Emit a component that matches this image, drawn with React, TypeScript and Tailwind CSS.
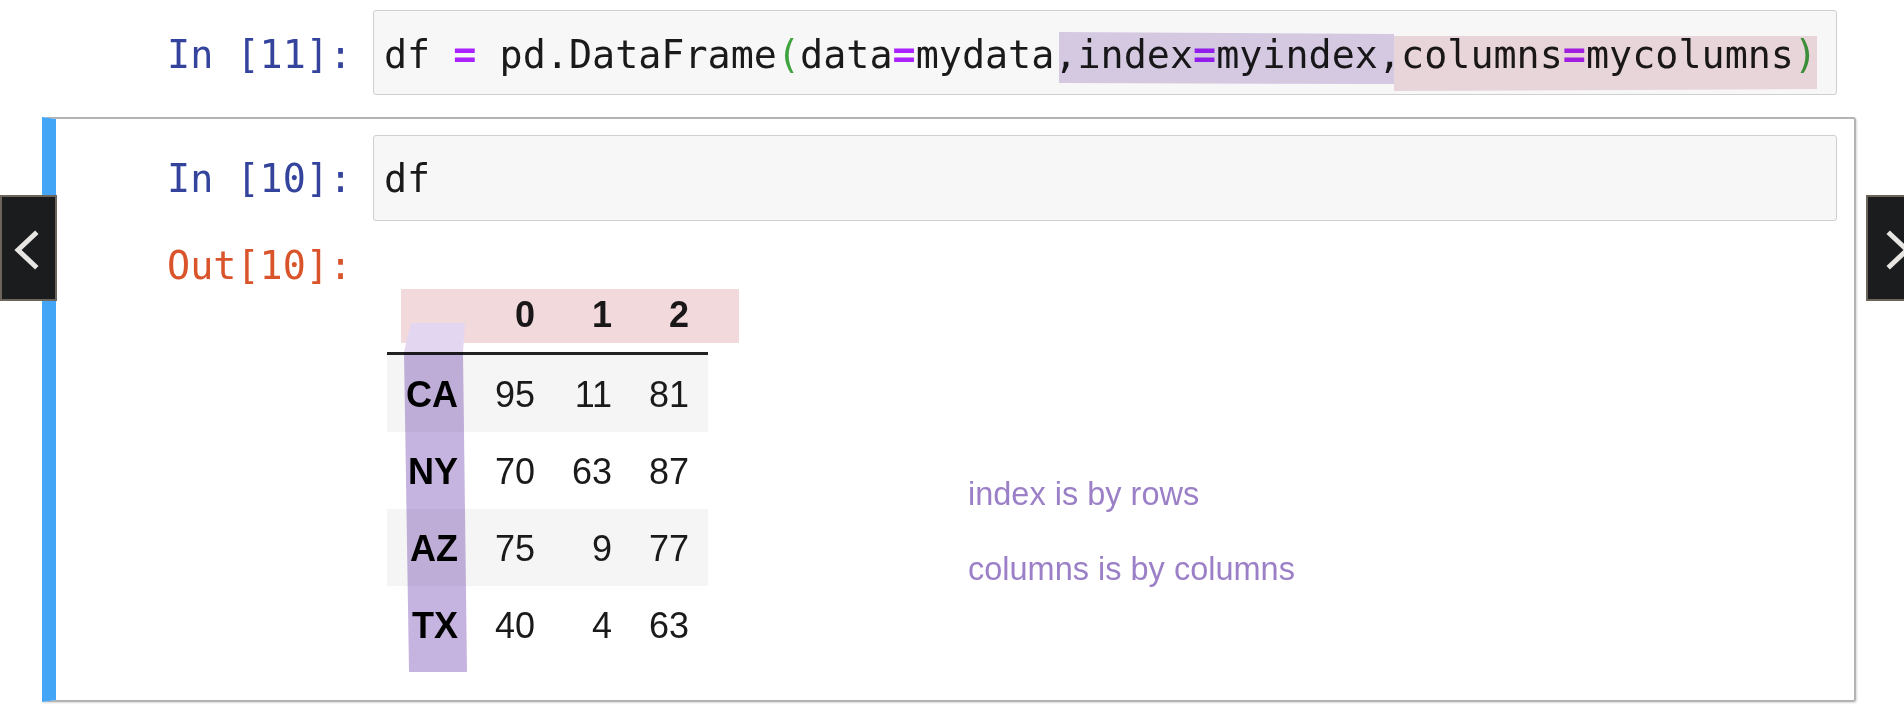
import React from "react";

const mono = { fontFamily: '"DejaVu Sans Mono", "Liberation Mono", monospace' };

function Code() {
  return (
    <span>
      df <span className="text-[#aa22ff] font-bold">=</span> pd.DataFrame
      <span className="text-[#3fa33f]">(</span>data<span className="text-[#aa22ff] font-bold">=</span>mydata,index
      <span className="text-[#aa22ff] font-bold">=</span>myindex,columns
      <span className="text-[#aa22ff] font-bold">=</span>mycolumns
      <span className="text-[#3fa33f]">)</span>
    </span>
  );
}

const rows: [string, number, number, number][] = [
  ["CA", 95, 11, 81],
  ["NY", 70, 63, 87],
  ["AZ", 75, 9, 77],
  ["TX", 40, 4, 63],
];

function Table() {
  return (
    <div
      className="text-[36px] text-[#1a1a1a] leading-[44px]"
      style={{ fontFamily: '"Liberation Sans", Arial, sans-serif' }}
    >
      <div className="flex h-[77px] items-center border-b-[3px] border-[#222] font-bold">
        <div className="w-[90px]" />
        <div className="w-[77px] pr-[19px] text-right">0</div>
        <div className="w-[77px] pr-[19px] text-right">1</div>
        <div className="w-[77px] pr-[19px] text-right">2</div>
      </div>
      {rows.map((r, i) => (
        <div
          key={r[0]}
          className={
            "flex h-[77px] items-center pt-[2px] " + (i % 2 === 0 ? "bg-[#f5f5f5]" : "bg-white")
          }
        >
          <div className="w-[90px] pr-[19px] text-right font-bold text-black">{r[0]}</div>
          <div className="w-[77px] pr-[19px] text-right">{r[1]}</div>
          <div className="w-[77px] pr-[19px] text-right">{r[2]}</div>
          <div className="w-[77px] pr-[19px] text-right">{r[3]}</div>
        </div>
      ))}
    </div>
  );
}

export default function App() {
  return (
    <div className="relative w-[1904px] h-[706px] overflow-hidden bg-white">
      <div className="flex flex-col pt-[10px]" style={mono}>
        {/* top cell */}
        <div className="flex text-[38.4px] leading-[44px]">
          <div className="w-[373px] pr-[21px] pt-[23px] text-right text-[#34439c] whitespace-pre">
            In [11]:
          </div>
          <div className="w-[1464px] h-[85px] border border-[#cfcfcf] rounded-[3px] bg-[#f7f7f7] pl-[10px] pt-[22px] text-[#1a1a1a] whitespace-pre">
            <Code />
          </div>
        </div>

        {/* selected cell */}
        <div className="ml-[42px] mt-[22px] w-[1814px] h-[585px] border-[2px] border-[#b3b3b3] border-l-[14px] border-l-[#42a5f5] rounded-r-[3px] shadow-[1px_1px_2px_rgba(0,0,0,0.15)] text-[38.4px] leading-[44px]">
          <div className="flex mt-[16px]">
            <div className="w-[317px] pr-[21px] pt-[22px] text-right text-[#34439c] whitespace-pre">
              In [10]:
            </div>
            <div className="w-[1464px] h-[86px] border border-[#cfcfcf] rounded-[3px] bg-[#f7f7f7] pl-[10px] pt-[21px] text-[#1a1a1a]">
              df
            </div>
          </div>
          <div className="flex">
            <div className="w-[317px] pr-[21px] mt-[23px] text-right text-[#d9542a] whitespace-pre self-start">
              Out[10]:
            </div>
            <div className="flex pl-[14px] pt-[57px]">
              <Table />
              <div
                className="ml-[260px] mt-[196px] flex flex-col gap-[35px] text-[32.5px] leading-[40px] text-[#9b7fc7] whitespace-nowrap"
                style={{ fontFamily: '"Liberation Sans", Arial, sans-serif' }}
              >
                <div>index is by rows</div>
                <div>columns is by columns</div>
              </div>
            </div>
          </div>
        </div>
      </div>

      {/* annotation highlights */}
      <svg
        className="absolute left-0 top-0 z-10 pointer-events-none mix-blend-multiply"
        width="1904"
        height="706"
        viewBox="0 0 1904 706"
      >
        <polygon points="1059,32 1394,34 1394,84 1059,83" fill="#dbd0e9" />
        <polygon points="1394,36 1817,36 1817,89 1394,91" fill="#f0dce0" />
        <polygon points="401,289 739,289 739,343 401,343" fill="#f2d9dc" />
        <polygon points="411,323 465,323 463,352 404,352" fill="#e2d6f0" />
        <polygon points="404,352 463,352 467,672 409,672" fill="#c6b4e0" />
      </svg>

      {/* nav buttons */}
      <div className="absolute left-0 top-[195px] z-20 w-[57px] h-[106px] bg-[#1b1c1e] border-2 border-[#6b655c]">
        <svg className="absolute left-0 top-0" width="57" height="106" viewBox="0 0 57 106">
          <polyline
            points="33,37 16,53 33,69"
            fill="none"
            stroke="#e8e6e2"
            strokeWidth="5"
            strokeLinecap="square"
          />
        </svg>
      </div>
      <div className="absolute left-[1866px] top-[195px] z-20 w-[57px] h-[106px] bg-[#1b1c1e] border-2 border-[#6b655c]">
        <svg className="absolute left-0 top-0" width="57" height="106" viewBox="0 0 57 106">
          <polyline
            points="22,37 39,53 22,69"
            fill="none"
            stroke="#e8e6e2"
            strokeWidth="5"
            strokeLinecap="square"
          />
        </svg>
      </div>
    </div>
  );
}
